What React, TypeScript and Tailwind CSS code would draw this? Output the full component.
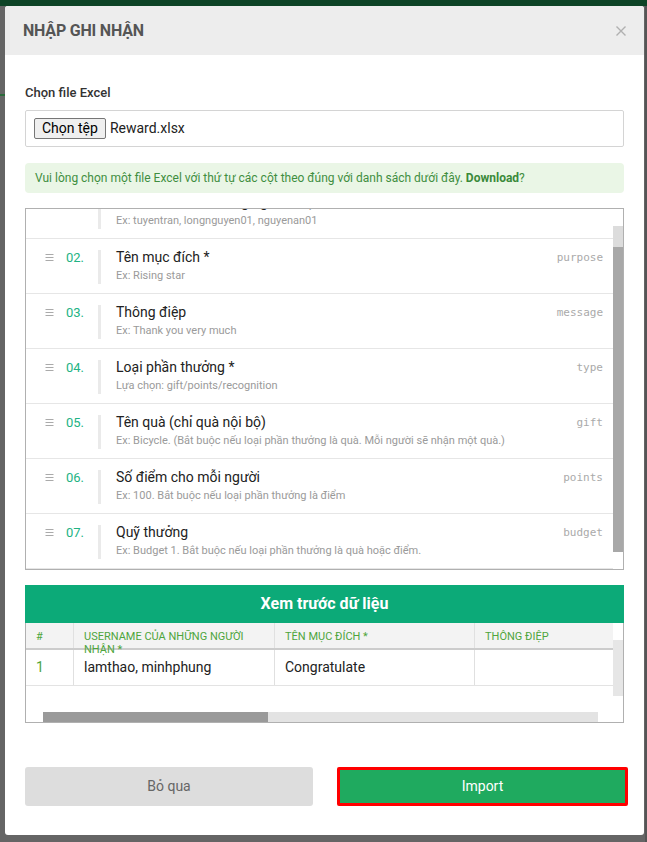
import React from "react";

const rows = [
  { n: "01.", title: "Username của những người nhận *", sub: "Ex: tuyentran, longnguyen01, nguyenan01", key: "username" },
  { n: "02.", title: "Tên mục đích *", sub: "Ex: Rising star", key: "purpose" },
  { n: "03.", title: "Thông điệp", sub: "Ex: Thank you very much", key: "message" },
  { n: "04.", title: "Loại phần thưởng *", sub: "Lựa chọn: gift/points/recognition", key: "type" },
  { n: "05.", title: "Tên quà (chỉ quà nội bộ)", sub: "Ex: Bicycle. (Bắt buộc nếu loại phần thưởng là quà. Mỗi người sẽ nhận một quà.)", key: "gift" },
  { n: "06.", title: "Số điểm cho mỗi người", sub: "Ex: 100. Bắt buộc nếu loại phần thưởng là điểm", key: "points" },
  { n: "07.", title: "Quỹ thưởng", sub: "Ex: Budget 1. Bắt buộc nếu loại phần thưởng là quà hoặc điểm.", key: "budget" },
];

function Handle() {
  return (
    <svg width="9" height="9" viewBox="0 0 9 9" className="shrink-0 mt-[3px]">
      <path d="M0.5 1.5H8.5M0.5 4.5H8.5M0.5 7.5H8.5" stroke="#aaaaaa" strokeWidth="1" />
    </svg>
  );
}

export default function App() {
  return (
    <div
      className="relative min-h-[842px] w-[647px] bg-[#656565] overflow-hidden"
      style={{ fontFamily: "Roboto, 'Noto Sans', sans-serif" }}
    >
      <div className="h-[6px] bg-[#0d4426]" />
      <div className="absolute left-0 top-[94px] h-[2px] w-[5px] bg-[#2a6a3a]" />
      <div className="absolute right-0 top-[6px] h-[836px] w-[2px] bg-[#555]" />

      <div className="ml-[5px] w-[639px] bg-white rounded-[3px] overflow-hidden">
        {/* header */}
        <div className="h-[49px] bg-[#ededed] flex items-center justify-between pl-[18px] pr-[18px]">
          <div className="text-[16px] font-bold text-[#555] tracking-[-0.2px]">NHẬP GHI NHẬN</div>
          <svg width="10" height="10" viewBox="0 0 10 10">
            <path d="M0.5 0.5L9.5 9.5M9.5 0.5L0.5 9.5" stroke="#b0b0b0" strokeWidth="1.4" />
          </svg>
        </div>

        {/* body */}
        <div className="px-[20px] pt-[30px] pb-[29px]">
          <div className="text-[13px] leading-[16px] font-medium text-[#333]">Chọn file Excel</div>

          <div className="mt-[9px] h-[37px] border border-[#d4d4d4] rounded-[2px] flex items-center pl-[8px]">
            <div className="h-[21px] px-[7px] bg-[#efefef] border border-[#767676] rounded-[2px] flex items-center text-[14px] text-black">
              Chọn tệp
            </div>
            <div className="ml-[4px] text-[14px] text-[#222]">Reward.xlsx</div>
          </div>

          <div className="mt-[16px] h-[30px] rounded-[4px] bg-[#eaf6e6] flex items-center pl-[10px] text-[12px] text-[#3f8e3f]">
            <span>
              Vui lòng chọn một file Excel với thứ tự các cột theo đúng với danh sách dưới đây.{" "}
              <span className="font-bold text-[#3a8a3a]">Download</span>?
            </span>
          </div>

          {/* column list */}
          <div className="mt-[15px] h-[362px] border border-[#b0b0b0] flex overflow-hidden">
            <div className="flex-1 overflow-hidden">
              <div className="mt-[-25px]">
                {rows.map((r) => (
                  <div
                    key={r.n}
                    className="h-[55px] border-b border-[#e6e6e6] flex items-start pl-[19px] pr-[10px] pt-[11px]"
                  >
                    <Handle />
                    <div className="ml-[12px] w-[32px] text-[13px] leading-[16px] text-[#22b383]">{r.n}</div>
                    <div className="w-[3px] h-[34px] bg-[#eaeaea]" />
                    <div className="ml-[15px] flex-1 min-w-0">
                      <div className="mt-[-2px] text-[14px] leading-[18px] text-[#222]">{r.title}</div>
                      <div className="mt-[2px] text-[11px] leading-[16px] text-[#9a9a9a] whitespace-nowrap">{r.sub}</div>
                    </div>
                    <div
                      className="text-[11px] leading-[16px] text-[#aaaaaa]"
                      style={{ fontFamily: "'DejaVu Sans Mono', 'Liberation Mono', monospace" }}
                    >
                      {r.key}
                    </div>
                  </div>
                ))}
              </div>
            </div>
            <div className="w-[10px] flex flex-col">
              <div className="h-[17px]" />
              <div className="h-[21px] bg-[#dcdcdc]" />
              <div className="h-[305px] bg-[#a8a8a8]" />
            </div>
          </div>

          {/* preview */}
          <div className="mt-[15px]">
            <div className="h-[38px] bg-[#0caa78] flex items-center justify-center text-[16px] font-bold text-white">
              Xem trước dữ liệu
            </div>
            <div className="h-[100px] border border-t-0 border-[#b0b0b0] flex overflow-hidden">
              <div className="flex-1 overflow-hidden flex flex-col">
                <div className="flex h-[27px] bg-[#f3f3f3] border-b-2 border-[#cccccc] text-[11px] leading-[13px] text-[#4ea53c] shrink-0">
                  <div className="w-[47px] shrink-0 pl-[10px] pt-[7px]">#</div>
                  <div className="w-[201px] shrink-0 border-l border-[#e0e0e0] pl-[10px] pt-[7px] whitespace-normal">
                    USERNAME CỦA NHỮNG NGƯỜI NHẬN *
                  </div>
                  <div className="w-[200px] shrink-0 border-l border-[#e0e0e0] pl-[10px] pt-[7px]">TÊN MỤC ĐÍCH *</div>
                  <div className="w-[200px] shrink-0 border-l border-[#e0e0e0] pl-[10px] pt-[7px]">THÔNG ĐIỆP</div>
                </div>
                <div className="flex h-[36px] border-b border-[#e3e3e3] text-[14px] shrink-0">
                  <div className="w-[47px] shrink-0 pl-[10px] flex items-center text-[#4ea53c]">1</div>
                  <div className="w-[201px] shrink-0 border-l border-[#e0e0e0] pl-[10px] flex items-center text-[#222]">
                    lamthao, minhphung
                  </div>
                  <div className="w-[200px] shrink-0 border-l border-[#e0e0e0] pl-[10px] flex items-center text-[#222]">
                    Congratulate
                  </div>
                  <div className="w-[200px] shrink-0 border-l border-[#e0e0e0]" />
                </div>
                <div className="h-[26px] shrink-0" />
                <div className="ml-[17px] w-[555px] h-[10px] bg-[#e3e3e3] flex">
                  <div className="w-[225px] h-full bg-[#9a9a9a]" />
                </div>
              </div>
              <div className="w-[10px] flex flex-col">
                <div className="h-[17px]" />
                <div className="h-[56px] bg-[#e6e6e6]" />
              </div>
            </div>
          </div>

          {/* buttons */}
          <div className="mt-[44px] grid grid-cols-[288px_291px] gap-[24px]">
            <div className="h-[39px] rounded-[3px] bg-[#dddddd] flex items-center justify-center text-[14px] text-[#666]">
              Bỏ qua
            </div>
            <div className="h-[39px] border-[3px] border-[#ff0000] rounded-[2px] bg-[#1faa5f] flex items-center justify-center text-[14px] text-white">
              Import
            </div>
          </div>
        </div>
      </div>
    </div>
  );
}
